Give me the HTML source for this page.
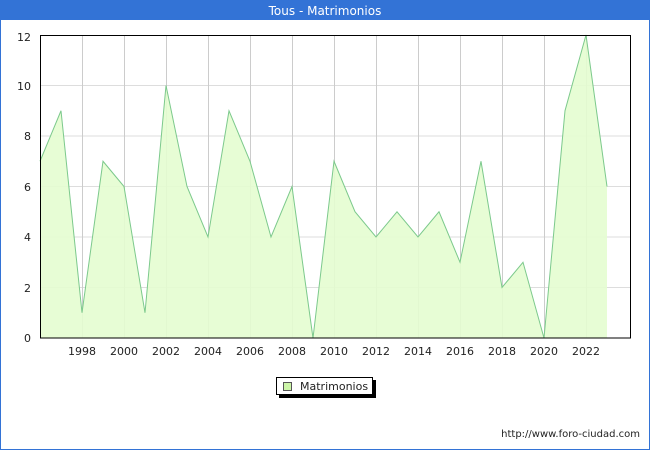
<!DOCTYPE html><html><head><style>body{margin:0}svg{display:block}text{font-family:"DejaVu Sans","Liberation Sans",sans-serif;font-size:11px;fill:#222}</style></head><body>
<svg width="650" height="450" xmlns="http://www.w3.org/2000/svg">
<rect width="650" height="450" fill="#fff"/>
<rect x="0.5" y="0" width="649" height="449.5" fill="none" stroke="#3373d6"/>
<rect x="0" y="0" width="650" height="20" fill="#3373d6"/>
<text x="325" y="15" text-anchor="middle" style="fill:#fff;font-size:12px">Tous - Matrimonios</text>
<g stroke="#ddd" stroke-width="1">
<line x1="40" x2="630" y1="287.5" y2="287.5"/><line x1="40" x2="630" y1="237" y2="237"/><line x1="40" x2="630" y1="186.5" y2="186.5"/><line x1="40" x2="630" y1="136" y2="136"/><line x1="40" x2="630" y1="85.5" y2="85.5"/>
</g>
<g stroke="#ccc" stroke-width="1">
<line x1="82.5" x2="82.5" y1="35" y2="338"/><line x1="124.5" x2="124.5" y1="35" y2="338"/><line x1="166.5" x2="166.5" y1="35" y2="338"/><line x1="208.5" x2="208.5" y1="35" y2="338"/><line x1="250.5" x2="250.5" y1="35" y2="338"/><line x1="292.5" x2="292.5" y1="35" y2="338"/><line x1="334.5" x2="334.5" y1="35" y2="338"/><line x1="376.5" x2="376.5" y1="35" y2="338"/><line x1="418.5" x2="418.5" y1="35" y2="338"/><line x1="460.5" x2="460.5" y1="35" y2="338"/><line x1="502.5" x2="502.5" y1="35" y2="338"/><line x1="544.5" x2="544.5" y1="35" y2="338"/><line x1="586.5" x2="586.5" y1="35" y2="338"/>
</g>
<polygon fill="#e4fdd0" fill-opacity="0.9" points="40,338 40,161.25 61,110.75 82,312.75 103,161.25 124,186.5 145,312.75 166,85.5 187,186.5 208,237 229,110.75 250,161.25 271,237 292,186.5 313,338 334,161.25 355,211.75 376,237 397,211.75 418,237 439,211.75 460,262.25 481,161.25 502,287.5 523,262.25 544,338 565,110.75 586,35 607,186.5 607,338"/>
<polyline fill="none" stroke="#7cc98c" stroke-width="1" points="40,161.25 61,110.75 82,312.75 103,161.25 124,186.5 145,312.75 166,85.5 187,186.5 208,237 229,110.75 250,161.25 271,237 292,186.5 313,338 334,161.25 355,211.75 376,237 397,211.75 418,237 439,211.75 460,262.25 481,161.25 502,287.5 523,262.25 544,338 565,110.75 586,35 607,186.5"/>
<rect x="40.5" y="35.5" width="590" height="302.5" fill="none" stroke="#000"/>
<g text-anchor="end"><text x="31" y="41">12</text><text x="31" y="90">10</text><text x="31" y="140">8</text><text x="31" y="191">6</text><text x="31" y="241">4</text><text x="31" y="292">2</text><text x="31" y="342">0</text></g>
<g text-anchor="middle"><text x="82" y="355">1998</text><text x="124" y="355">2000</text><text x="166" y="355">2002</text><text x="208" y="355">2004</text><text x="250" y="355">2006</text><text x="292" y="355">2008</text><text x="334" y="355">2010</text><text x="376" y="355">2012</text><text x="418" y="355">2014</text><text x="460" y="355">2016</text><text x="502" y="355">2018</text><text x="544" y="355">2020</text><text x="586" y="355">2022</text></g>
<rect x="279" y="380" width="97" height="18" fill="#000"/>
<rect x="276.5" y="377.5" width="96" height="17" fill="#fff" stroke="#000"/>
<rect x="283.5" y="382.5" width="8" height="8" fill="#ccf5a8" stroke="#555"/>
<text x="300" y="390">Matrimonios</text>
<text x="640" y="437" text-anchor="end" style="font-size:10px">http://www.foro-ciudad.com</text>
</svg></body></html>
